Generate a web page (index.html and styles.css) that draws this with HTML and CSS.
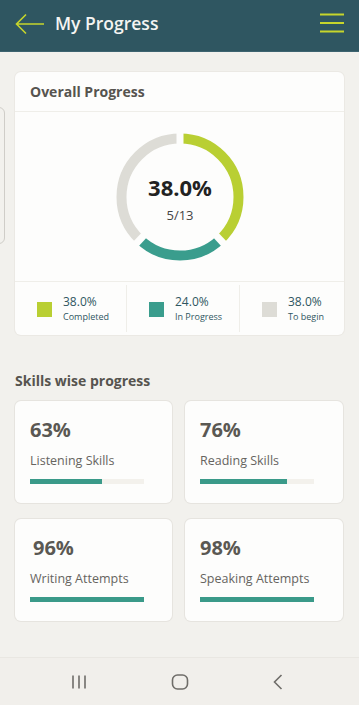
FILE: index.html
```html
<!DOCTYPE html>
<html lang="en">
<head>
<meta charset="utf-8">
<title>My Progress</title>
<link rel="stylesheet" href="styles.css">
</head>
<body>
<header class="topbar">
  <div class="topbar-left">
    <svg class="back" width="30" height="22" viewBox="0 0 30 22"><path d="M29 11H2M11 1.5L1.5 11L11 20.5" fill="none" stroke="#c6d52c" stroke-width="1.6"/></svg>
    <h1 class="title">My Progress</h1>
  </div>
  <svg class="menu" width="26" height="20" viewBox="0 0 26 20"><path d="M1 1.5H25M1 10H25M1 18.5H25" stroke="#c6d52c" stroke-width="2"/></svg>
</header>

<div class="peek"></div>

<main class="content">
  <section class="card overall">
    <div class="card-head">Overall Progress</div>
    <div class="donut-wrap">
      <div class="donut">
        <svg width="130" height="130" viewBox="0 0 130 130">
          <g transform="rotate(-90 65 65)" fill="none" stroke-width="10">
            <circle cx="65" cy="65" r="58.5" stroke="#b9cf33" stroke-dasharray="139.68 367.57" stroke-dashoffset="0"/>
            <circle cx="65" cy="65" r="58.5" stroke="#3a9d8d" stroke-dasharray="88.22 367.57" stroke-dashoffset="-139.68"/>
            <circle cx="65" cy="65" r="58.5" stroke="#dddcd6" stroke-dasharray="139.68 367.57" stroke-dashoffset="-227.9"/>
          </g>
          <g stroke="#fdfdfc" stroke-width="7">
            <path d="M65 16V0"/>
            <path d="M100.6 102.9L111 114"/>
            <path d="M29.4 102.9L19 114"/>
          </g>
        </svg>
        <div class="donut-text">
          <div class="donut-pct">38.0%</div>
          <div class="donut-frac">5/13</div>
        </div>
      </div>
    </div>
    <div class="legend">
      <div class="legend-item">
        <span class="swatch sw-green"></span>
        <div class="legend-text"><div class="legend-val">38.0%</div><div class="legend-lbl">Completed</div></div>
      </div>
      <div class="legend-item">
        <span class="swatch sw-teal"></span>
        <div class="legend-text"><div class="legend-val">24.0%</div><div class="legend-lbl">In Progress</div></div>
      </div>
      <div class="legend-item">
        <span class="swatch sw-grey"></span>
        <div class="legend-text"><div class="legend-val">38.0%</div><div class="legend-lbl">To begin</div></div>
      </div>
    </div>
  </section>

  <h2 class="section-title">Skills wise progress</h2>

  <div class="skills">
    <div class="card skill">
      <div class="skill-pct">63%</div>
      <div class="skill-name">Listening Skills</div>
      <div class="bar"><div class="bar-fill" style="width:63%"></div></div>
    </div>
    <div class="card skill">
      <div class="skill-pct">76%</div>
      <div class="skill-name">Reading Skills</div>
      <div class="bar"><div class="bar-fill" style="width:76%"></div></div>
    </div>
    <div class="card skill">
      <div class="skill-pct indent">96%</div>
      <div class="skill-name">Writing Attempts</div>
      <div class="bar"><div class="bar-fill" style="width:100%"></div></div>
    </div>
    <div class="card skill">
      <div class="skill-pct">98%</div>
      <div class="skill-name">Speaking Attempts</div>
      <div class="bar"><div class="bar-fill" style="width:100%"></div></div>
    </div>
  </div>
</main>

<nav class="navbar">
  <svg width="16" height="16" viewBox="0 0 16 16"><path d="M2 1.5V14.5M8 1.5V14.5M14 1.5V14.5" stroke="#6f6d69" stroke-width="1.6"/></svg>
  <svg width="18" height="16" viewBox="0 0 18 16"><rect x="1.5" y="1" width="15" height="14" rx="5" fill="none" stroke="#6f6d69" stroke-width="1.6"/></svg>
  <svg width="12" height="16" viewBox="0 0 12 16"><path d="M9.5 1L2.5 8L9.5 15" fill="none" stroke="#6f6d69" stroke-width="1.6"/></svg>
</nav>
</body>
</html>
```

FILE: styles.css
```css
* { box-sizing: border-box; }

html, body {
  margin: 0;
  padding: 0;
}

body {
  width: 359px;
  height: 705px;
  overflow: hidden;
  background: #f2f1ed;
  font-family: "Open Sans", "Noto Sans", sans-serif;
  position: relative;
  display: flex;
  flex-direction: column;
}

.topbar {
  height: 52px;
  flex: none;
  background: #2f5661;
  border-bottom: 1px solid #3d6470;
  display: flex;
  align-items: center;
  justify-content: space-between;
  padding: 0 14px 4px 15px;
}

.topbar-left {
  display: flex;
  align-items: center;
  gap: 10px;
}

.back { display: block; margin-top: 1px; }

.title {
  margin: 0;
  font-size: 17.5px;
  font-weight: 600;
  color: #f4f4f2;
  line-height: 24px;
  margin-top: -2px;
}

.menu { display: block; margin-top: -1px; }

.peek {
  position: absolute;
  left: -10px;
  top: 107px;
  width: 15px;
  height: 137px;
  border: 1px solid #cfcdc8;
  border-radius: 6px;
}

.content {
  flex: 1;
  padding: 20px 15px 0 15px;
}

.card {
  background: #fdfdfc;
  border-radius: 6px;
  box-shadow: 0 0 0 1px #ebe9e4;
}

.overall { height: 263px; display: flex; flex-direction: column; }

.card-head {
  height: 40px;
  padding: 0 15px;
  display: flex;
  align-items: center;
  font-size: 14px;
  font-weight: 700;
  color: #56544f;
  border-bottom: 1px solid #efeee9;
}

.donut-wrap {
  height: 170px;
  display: flex;
  justify-content: center;
  padding-top: 20px;
  border-bottom: 1px solid #efeee9;
}

.donut {
  position: relative;
  width: 130px;
  height: 130px;
  margin-left: 1px;
}

.donut svg { display: block; }

.donut-text {
  position: absolute;
  inset: 0;
  display: flex;
  flex-direction: column;
  align-items: center;
  justify-content: center;
  padding-top: 2px;
}

.donut-pct {
  font-size: 22px;
  font-weight: 700;
  color: #222;
  line-height: 28px;
}

.donut-frac {
  font-size: 13px;
  color: #444;
  line-height: 18px;
  margin-top: 5px;
}

.legend {
  flex: 1;
  display: grid;
  grid-template-columns: 111px 113px 1fr;
  padding: 3px 0;
}

.legend-item {
  display: flex;
  align-items: center;
  padding-left: 22px;
  gap: 11px;
}

.legend-item + .legend-item { border-left: 1px solid #efeee9; }

.swatch {
  width: 15px;
  height: 15px;
  flex: none;
  margin-top: 1px;
}
.sw-green { background: #b9cf33; }
.sw-teal { background: #3a9d8d; }
.sw-grey { background: #dddcd6; }

.legend-text {
  display: flex;
  flex-direction: column;
  gap: 1px;
}

.legend-val {
  font-size: 12px;
  line-height: 16px;
  color: #2f5661;
}

.legend-lbl {
  font-size: 9px;
  line-height: 12px;
  color: #2f5661;
}

.section-title {
  margin: 36px 0 10px 0;
  font-size: 14px;
  font-weight: 700;
  line-height: 20px;
  color: #56544f;
}

.skills {
  display: grid;
  grid-template-columns: 157px 158px;
  column-gap: 13px;
  row-gap: 16px;
}

.skill {
  height: 102px;
  padding: 17px 15px 0 15px;
  box-shadow: 0 0 0 1px #e6e4df;
}

.skill-pct {
  font-size: 20px;
  font-weight: 700;
  color: #5a5853;
  line-height: 24px;
}

.skill-pct.indent { padding-left: 3px; }

.skill-name {
  margin-top: 10px;
  font-size: 12.5px;
  color: #66645f;
  line-height: 18px;
}

.bar {
  margin-top: 9px;
  width: 114px;
  height: 5px;
  background: #f3f1ec;
}

.bar-fill {
  height: 100%;
  background: #3a9a89;
}

.navbar {
  height: 48px;
  flex: none;
  border-top: 1px solid #e9e7e2;
  background: #f1efeb;
  display: flex;
  align-items: center;
  justify-content: space-between;
  padding: 0 75px 0 71px;
}

.navbar svg { display: block; }
```
